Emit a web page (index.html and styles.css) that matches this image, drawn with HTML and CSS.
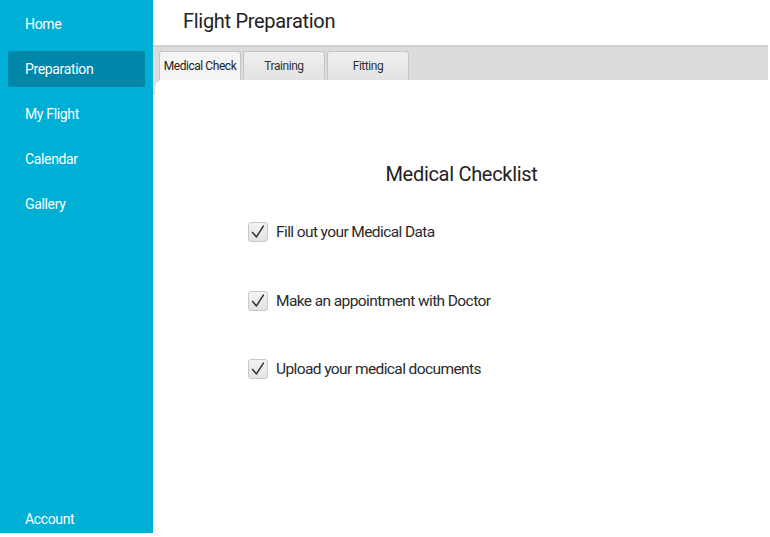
FILE: index.html
```html
<!DOCTYPE html>
<html>
<head>
<meta charset="utf-8">
<link rel="stylesheet" href="styles.css">
</head>
<body>
<div class="app">
  <nav class="sidebar">
    <div class="nav-top">
      <a class="nav-item">Home</a>
      <a class="nav-item active">Preparation</a>
      <a class="nav-item">My Flight</a>
      <a class="nav-item">Calendar</a>
      <a class="nav-item">Gallery</a>
    </div>
    <a class="nav-item account">Account</a>
  </nav>
  <main class="main">
    <h1 class="title">Flight Preparation</h1>
    <div class="content">
      <div class="tabbar">
        <div class="tab active">Medical Check</div>
        <div class="tab">Training</div>
        <div class="tab">Fitting</div>
      </div>
      <section class="panel">
        <h2 class="panel-title">Medical Checklist</h2>
        <ul class="checklist">
          <li class="check-row"><span class="box"><svg viewBox="0 0 20 20"><path d="M4 10.5 L8.3 15.5 L16 3.5" fill="none" stroke="#333" stroke-width="1.7" stroke-linecap="round" stroke-linejoin="round"/></svg></span>Fill out your Medical Data</li>
          <li class="check-row"><span class="box"><svg viewBox="0 0 20 20"><path d="M4 10.5 L8.3 15.5 L16 3.5" fill="none" stroke="#333" stroke-width="1.7" stroke-linecap="round" stroke-linejoin="round"/></svg></span>Make an appointment with Doctor</li>
          <li class="check-row"><span class="box"><svg viewBox="0 0 20 20"><path d="M4 10.5 L8.3 15.5 L16 3.5" fill="none" stroke="#333" stroke-width="1.7" stroke-linecap="round" stroke-linejoin="round"/></svg></span>Upload your medical documents</li>
        </ul>
      </section>
    </div>
  </main>
</div>
</body>
</html>
```

FILE: styles.css
```css
* { box-sizing: border-box; }
html, body { margin: 0; padding: 0; background: #ffffff; }
body { font-family: Roboto, "Liberation Sans", sans-serif; width: 770px; height: 537px; overflow: hidden; }

.app {
  display: grid;
  grid-template-columns: 153px 615px;
  height: 535px;
}

.sidebar {
  background: #00afd6;
  height: 533px;
  display: flex;
  flex-direction: column;
  justify-content: space-between;
  padding: 6px 8px 0 8px;
}
.nav-top { display: flex; flex-direction: column; gap: 9px; }
.nav-item {
  display: block;
  height: 36px;
  line-height: 36px;
  padding-left: 17px;
  color: #ffffff;
  font-size: 14px;
  letter-spacing: -0.35px;
  border-radius: 2px;
}
.nav-item.active { background: #0086a8; }
.nav-item.account { height: 28px; line-height: 28px; }

.main {
  display: flex;
  flex-direction: column;
}
.title {
  margin: 0;
  height: 45px;
  padding: 9px 0 0 30px;
  font-size: 20px;
  font-weight: 400;
  letter-spacing: -0.3px;
  color: #222;
}
.content {
  flex: 1;
  display: flex;
  flex-direction: column;
  background: linear-gradient(#dcdcdc 0, #dcdcdc 50px, #ffffff 50px);
}
.tabbar {
  height: 35px;
  background: #dcdcdc;
  border-top: 2px solid #d0d0d0;
  display: flex;
  align-items: flex-end;
  gap: 2px;
  padding-left: 6px;
}
.tab {
  width: 82px;
  height: 29px;
  line-height: 28px;
  text-align: center;
  font-size: 12px;
  letter-spacing: -0.45px;
  color: #333;
  background: linear-gradient(#f0f0f0, #e2e2e2);
  border: 1px solid #c6c6c6;
  border-bottom: none;
  border-radius: 3px 3px 0 0;
}
.tab.active { background: #f4f4f4; color: #222; }

.panel {
  flex: 1;
  background: #ffffff;
  margin-left: 2px;
  border-radius: 8px 0 0 0;
  padding-top: 82px;
}
.panel-title {
  margin: 0 0 36px 0;
  text-align: center;
  font-size: 20px;
  font-weight: 400;
  letter-spacing: -0.3px;
  color: #222;
}
.checklist {
  list-style: none;
  margin: 0;
  padding: 0 0 0 93px;
  display: flex;
  flex-direction: column;
  gap: 48.5px;
}
.check-row {
  display: flex;
  align-items: center;
  gap: 8px;
  font-size: 15.5px;
  letter-spacing: -0.6px;
  color: #2a2a2a;
  height: 20px;
}
.box {
  width: 20px;
  height: 20px;
  border: 1px solid #c8c8c8;
  border-radius: 3px;
  background: linear-gradient(#f3f3f3, #e3e3e3);
  display: flex;
  align-items: center;
  justify-content: center;
  flex: none;
}
.box svg { display: block; width: 18px; height: 18px; }
```
